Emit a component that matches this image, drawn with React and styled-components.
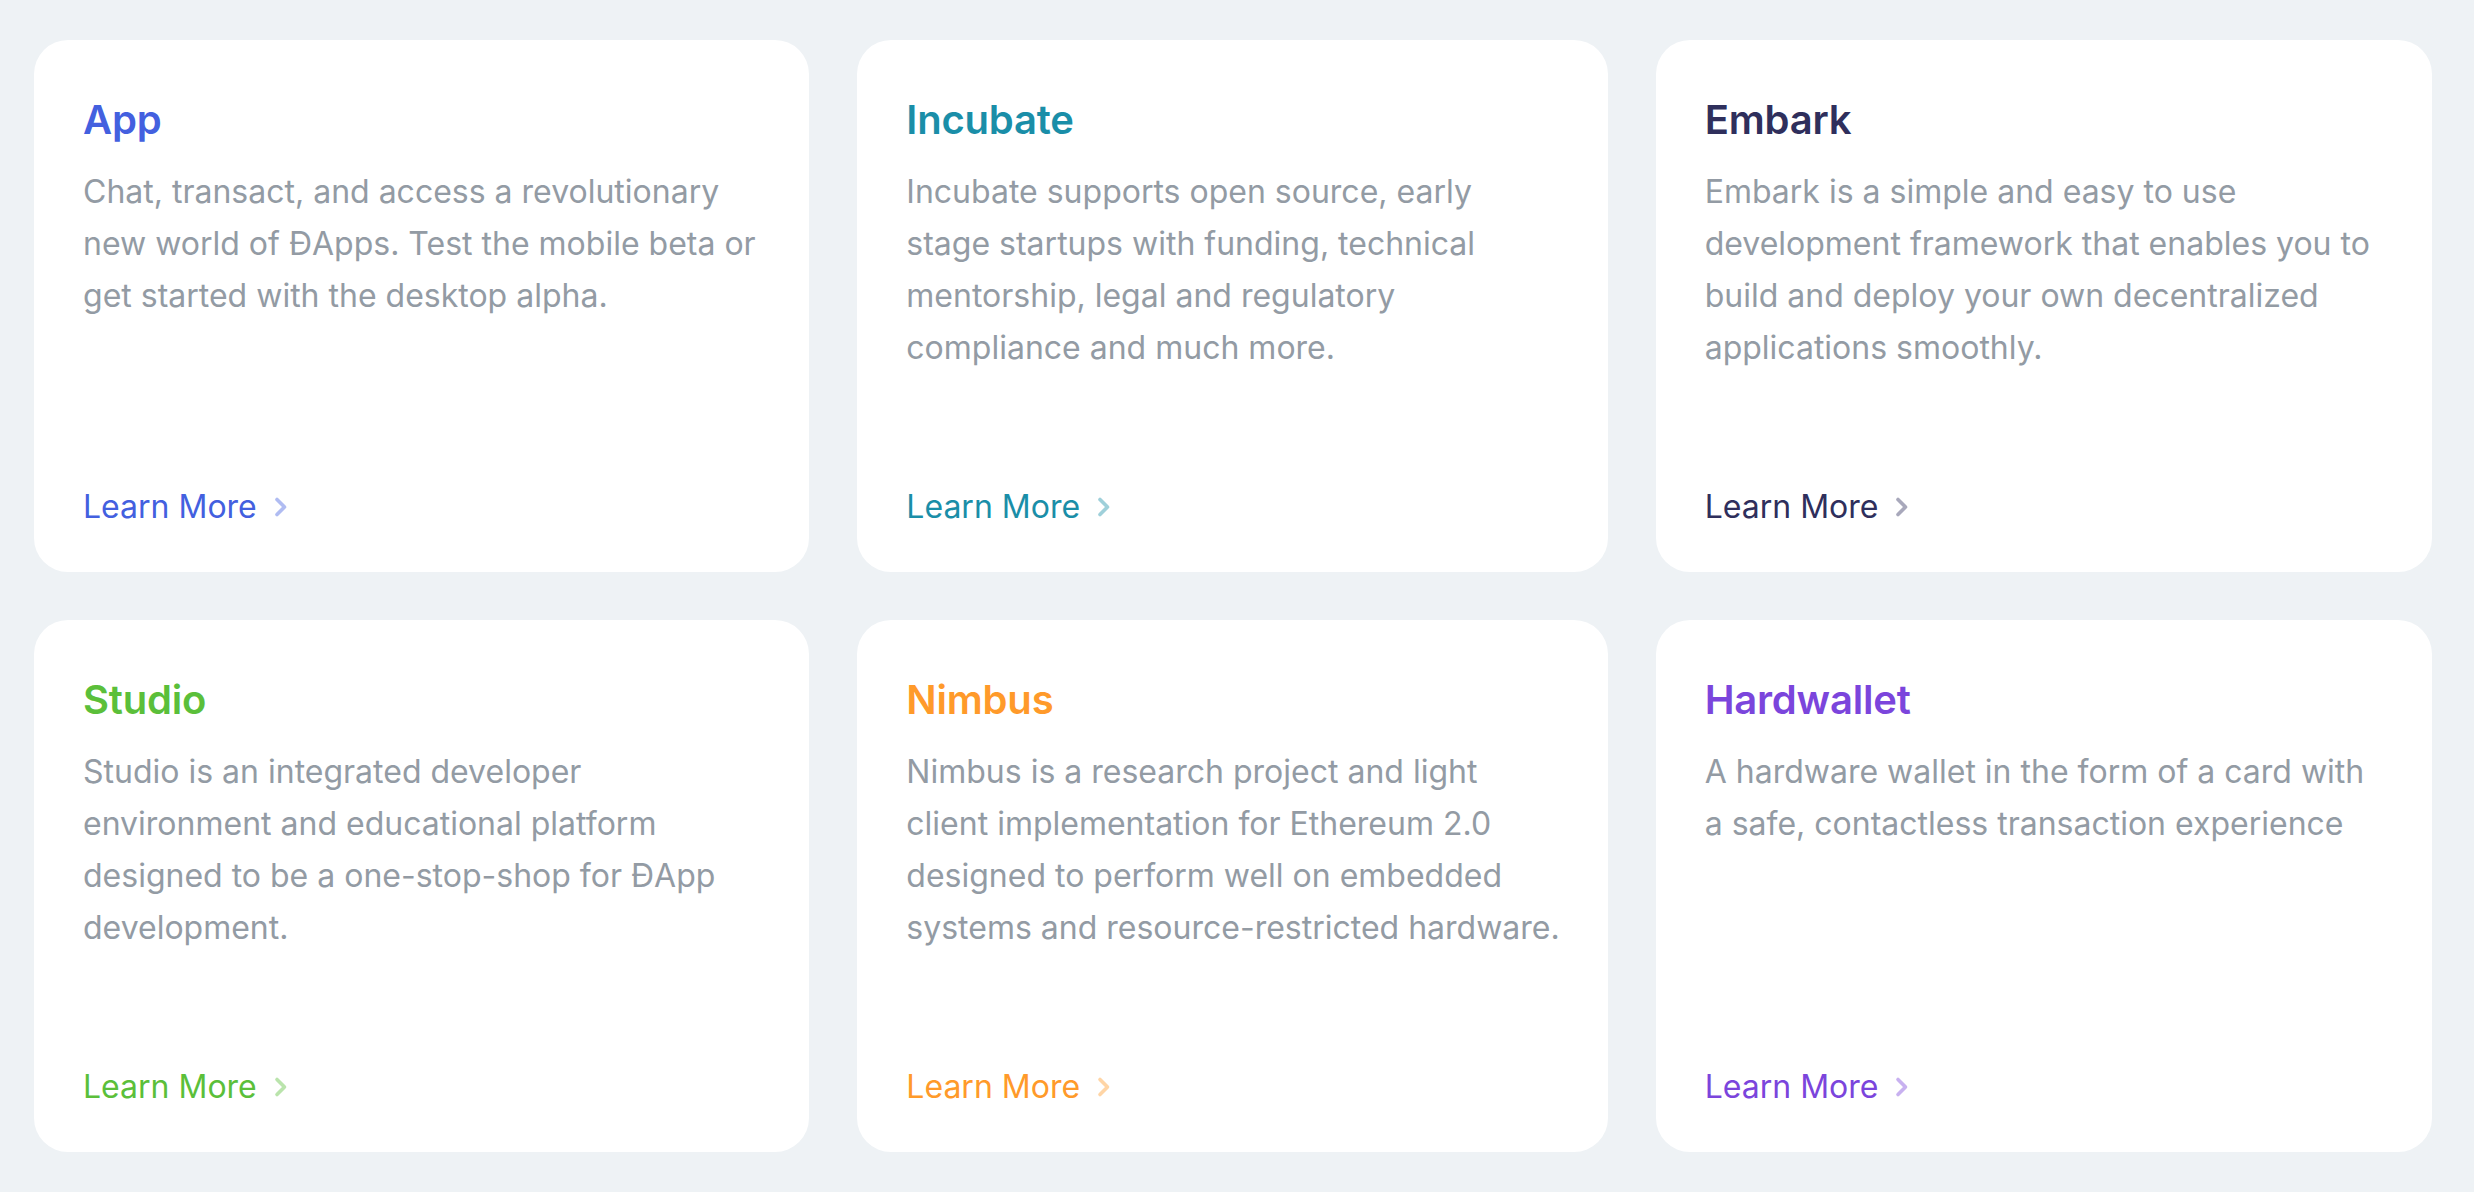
import React from "react";
import styled, { createGlobalStyle } from "styled-components";

const Global = createGlobalStyle`
  html, body { margin: 0; padding: 0; background: #eef2f5; }
  body { font-family: Inter, "Noto Sans", sans-serif; -webkit-font-smoothing: antialiased; }
`;

const Page = styled.main`
  box-sizing: border-box;
  width: 2474px;
  min-height: 1192px;
  padding: 40px 42px 40px 34px;
  background: #eef2f5;
`;

const Grid = styled.div`
  display: grid;
  grid-template-columns: 775fr 750fr 776fr;
  grid-auto-rows: 532px;
  column-gap: 48px;
  row-gap: 48px;
`;

const Card = styled.article`
  display: flex;
  flex-direction: column;
  box-sizing: border-box;
  background: #ffffff;
  border-radius: 34px;
  padding: 54px 30px 45px 49px;
`;

const Title = styled.h2`
  margin: 0;
  font-family: Inter, sans-serif;
  font-weight: 600;
  font-size: 40px;
  line-height: 52px;
  letter-spacing: -0.2px;
  color: ${(p) => p.$color};
`;

const Body = styled.p`
  margin: 20px 0 0;
  font-family: Inter, sans-serif;
  font-weight: 400;
  font-size: 32px;
  line-height: 52px;
  color: #939ba4;
  white-space: nowrap;
`;

const Link = styled.a`
  margin-top: auto;
  display: inline-flex;
  align-items: center;
  gap: 17px;
  align-self: flex-start;
  font-family: Inter, sans-serif;
  font-size: 32px;
  line-height: 40px;
  color: ${(p) => p.$color};
  text-decoration: none;
  cursor: pointer;
`;

const Chevron = ({ color }) => (
  <svg width="14" height="22" viewBox="0 0 14 22" aria-hidden="true">
    <path
      d="M3 3.5 L10.5 11 L3 18.5"
      fill="none"
      stroke={color}
      strokeOpacity="0.42"
      strokeWidth="3.6"
      strokeLinecap="round"
      strokeLinejoin="round"
    />
  </svg>
);

const items = [
  {
    title: "App",
    color: "#4360df",
    lines: [
      "Chat, transact, and access a revolutionary",
      "new world of ĐApps. Test the mobile beta or",
      "get started with the desktop alpha.",
    ],
  },
  {
    title: "Incubate",
    color: "#1a8ea8",
    lines: [
      "Incubate supports open source, early",
      "stage startups with funding, technical",
      "mentorship, legal and regulatory",
      "compliance and much more.",
    ],
  },
  {
    title: "Embark",
    color: "#2f2f5c",
    lines: [
      "Embark is a simple and easy to use",
      "development framework that enables you to",
      "build and deploy your own decentralized",
      "applications smoothly.",
    ],
  },
  {
    title: "Studio",
    color: "#5bbf3a",
    lines: [
      "Studio is an integrated developer",
      "environment and educational platform",
      "designed to be a one-stop-shop for ĐApp",
      "development.",
    ],
  },
  {
    title: "Nimbus",
    color: "#ff9a2a",
    lines: [
      "Nimbus is a research project and light",
      "client implementation for Ethereum 2.0",
      "designed to perform well on embedded",
      "systems and resource-restricted hardware.",
    ],
  },
  {
    title: "Hardwallet",
    color: "#7b45dc",
    lines: [
      "A hardware wallet in the form of a card with",
      "a safe, contactless transaction experience",
    ],
  },
];

export default function App() {
  return (
    <Page>
      <Global />
      <Grid>
        {items.map((it) => (
          <Card key={it.title}>
            <Title $color={it.color}>{it.title}</Title>
            <Body>
              {it.lines.map((l, i) => (
                <React.Fragment key={i}>
                  {l}
                  {i < it.lines.length - 1 && <br />}
                </React.Fragment>
              ))}
            </Body>
            <Link $color={it.color}>
              Learn More
              <Chevron color={it.color} />
            </Link>
          </Card>
        ))}
      </Grid>
    </Page>
  );
}
